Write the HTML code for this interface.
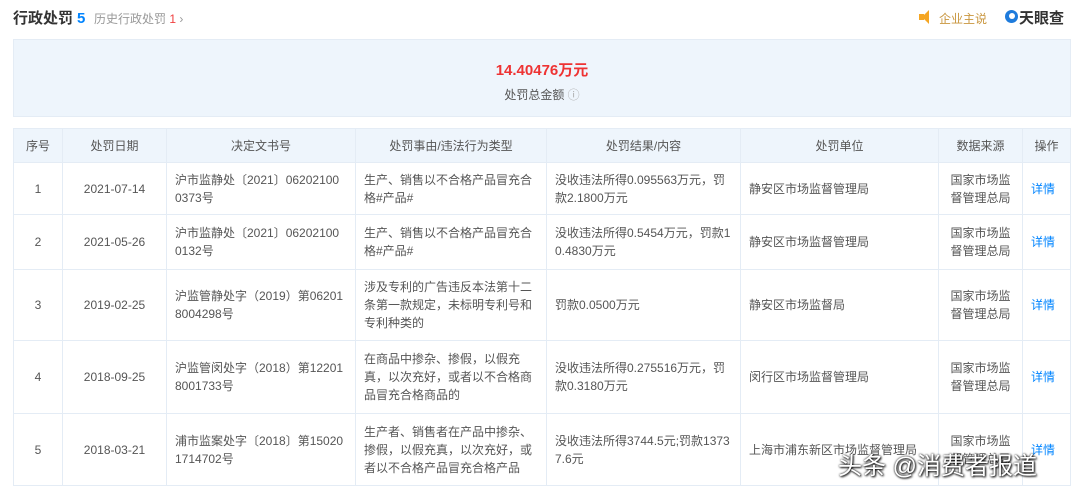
<!DOCTYPE html><html><head><meta charset="utf-8"><style>
body{margin:0;width:1080px;height:492px;background:#fff;font-family:"Liberation Sans","Noto Sans CJK SC",sans-serif;color:#333;position:relative;overflow:hidden}
.t{position:absolute;left:13px;top:7px;font-size:15px;font-weight:bold;color:#333}
.t b{color:#0084ff;margin-left:4px}
.h{position:absolute;left:94px;top:10px;font-size:12px;color:#999}
.h span{color:#f04040}
.sum{position:absolute;left:13px;top:39px;width:1058px;height:78px;background:#eef5fc;border:1px solid #e4ecf5;box-sizing:border-box;text-align:center}
.amt{margin-top:19px;font-size:15px;font-weight:bold;color:#e33}
.lbl{margin-top:6px;font-size:12px;color:#555}
table{position:absolute;left:13px;top:128px;border-collapse:collapse;font-size:12px;color:#555;table-layout:fixed}
td,th{border:1px solid #e4ecf5;padding:0 8px;line-height:18px;text-align:left;word-break:break-all}
th{background:#eef5fc;font-weight:normal;text-align:center;height:33px}
td.c{text-align:center}
a{color:#0084ff}
.wm{position:absolute;left:838px;top:446px;font-size:24px;color:#fff;text-shadow:0 0 2px #000,1px 1px 2px #000}
</style></head><body>
<div class="t">行政处罚<b>5</b></div>
<div class="h">历史行政处罚 <span>1</span> ›</div>
<div style="position:absolute;left:919px;top:14px;width:5px;height:6px;background:#f5a623"></div>
<div style="position:absolute;left:922px;top:10px;width:0;height:0;border-top:7px solid transparent;border-bottom:7px solid transparent;border-right:7px solid #f5a623"></div>
<div style="position:absolute;left:939px;top:10px;font-size:12px;color:#c9963e">企业主说</div>
<div style="position:absolute;left:1005px;top:10px;width:13px;height:13px;border-radius:50%;background:#1e7bdc"></div>
<div style="position:absolute;left:1009px;top:13px;width:6px;height:6px;border-radius:50%;background:#fff"></div>
<div style="position:absolute;left:1019px;top:7px;font-size:15px;font-weight:bold;color:#333">天眼查</div>
<div class="sum"><div class="amt">14.40476万元</div><div class="lbl">处罚总金额 <span style="color:#aaa">ⓘ</span></div></div>
<table>
<colgroup><col style="width:49px"><col style="width:104px"><col style="width:189px"><col style="width:191px"><col style="width:194px"><col style="width:198px"><col style="width:84px"><col style="width:48px"></colgroup>
<tr><th>序号</th><th>处罚日期</th><th>决定文书号</th><th>处罚事由/违法行为类型</th><th>处罚结果/内容</th><th>处罚单位</th><th>数据来源</th><th>操作</th></tr>
<tr style="height:52px"><td class="c">1</td><td class="c">2021-07-14</td><td>沪市监静处〔2021〕06202100 0373号</td><td>生产、销售以不合格产品冒充合格#产品#</td><td>没收违法所得0.095563万元，罚款2.1800万元</td><td>静安区市场监督管理局</td><td class="c">国家市场监督管理总局</td><td><a>详情</a></td></tr>
<tr style="height:55px"><td class="c">2</td><td class="c">2021-05-26</td><td>沪市监静处〔2021〕06202100 0132号</td><td>生产、销售以不合格产品冒充合格#产品#</td><td>没收违法所得0.5454万元，罚款10.4830万元</td><td>静安区市场监督管理局</td><td class="c">国家市场监督管理总局</td><td><a>详情</a></td></tr>
<tr style="height:71px"><td class="c">3</td><td class="c">2019-02-25</td><td>沪监管静处字（2019）第06201 8004298号</td><td>涉及专利的广告违反本法第十二条第一款规定，未标明专利号和专利种类的</td><td>罚款0.0500万元</td><td>静安区市场监督局</td><td class="c">国家市场监督管理总局</td><td><a>详情</a></td></tr>
<tr style="height:73px"><td class="c">4</td><td class="c">2018-09-25</td><td>沪监管闵处字（2018）第12201 8001733号</td><td>在商品中掺杂、掺假，以假充真，以次充好，或者以不合格商品冒充合格商品的</td><td>没收违法所得0.275516万元，罚款0.3180万元</td><td>闵行区市场监督管理局</td><td class="c">国家市场监督管理总局</td><td><a>详情</a></td></tr>
<tr style="height:72px"><td class="c">5</td><td class="c">2018-03-21</td><td>浦市监案处字〔2018〕第15020 1714702号</td><td>生产者、销售者在产品中掺杂、掺假，以假充真，以次充好，或者以不合格产品冒充合格产品</td><td>没收违法所得3744.5元;罚款13737.6元</td><td>上海市浦东新区市场监督管理局</td><td class="c">国家市场监督管理总局</td><td><a>详情</a></td></tr>
</table>
<div class="wm">头条 @消费者报道</div>
</body></html>
